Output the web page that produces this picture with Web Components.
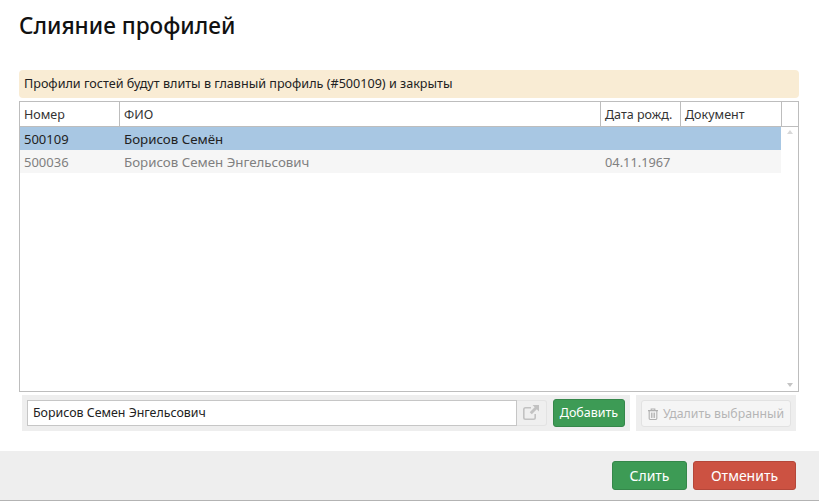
<!DOCTYPE html>
<html lang="ru">
<head>
<meta charset="utf-8">
<title>Слияние профилей</title>
<style>
  html, body { margin: 0; padding: 0; background: #fff; }
  body { font: 13px/18px "Noto Sans", sans-serif; color: #222; }
</style>
</head>
<body>
<merge-dialog>
  <span slot="title">Слияние профилей</span>
  <span slot="notice">Профили гостей будут влиты в главный профиль (#500109) и закрыты</span>
  <profile-grid slot="grid"></profile-grid>
  <app-button slot="actions" variant="success" size="large">Слить</app-button>
  <app-button slot="actions" variant="danger" size="large">Отменить</app-button>
</merge-dialog>

<script>
  let dialogTemplate = document.createElement("template");
  dialogTemplate.innerHTML = `
  <style>
    :host {
      display: flex;
      flex-direction: column;
      height: 501px;
      width: 819px;
      box-sizing: border-box;
    }
    h1 {
      margin: 0;
      padding: 11px 19px 0;
      height: 70px;
      box-sizing: border-box;
      font-size: 22.6px;
      line-height: 30px;
      font-weight: 500;
      color: #111;
    }
    .body {
      flex: 1;
      display: flex;
      flex-direction: column;
      padding: 0 20px 0 19px;
    }
    .notice {
      background: #f9ecd4;
      border-radius: 4px;
      height: 28px;
      line-height: 28px;
      padding: 0 5px;
      margin-bottom: 3px;
      font-size: 12.6px;
    }
    .tools {
      display: flex;
      justify-content: space-between;
      padding: 3px 3px 0;
      height: 36px;
      margin-bottom: 20px;
    }
    .footer {
      height: 50px;
      box-sizing: border-box;
      background: #eeeeee;
      border-bottom: 1px solid #b3b3b3;
      display: flex;
      justify-content: flex-end;
      align-items: center;
      gap: 6px;
      padding: 0 23px 0 0;
    }
  </style>
  <h1><slot name="title"></slot></h1>
  <div class="body">
    <div class="notice"><slot name="notice"></slot></div>
    <slot name="grid"></slot>
    <div class="tools">
      <guest-picker value="Борисов Семен Энгельсович"></guest-picker>
      <remove-panel></remove-panel>
    </div>
  </div>
  <div class="footer"><slot name="actions"></slot></div>
  `;

  class MergeDialog extends HTMLElement {
    constructor() {
      super();
      this.attachShadow({ mode: "open" }).appendChild(dialogTemplate.content.cloneNode(true));
    }
  }

  let gridTemplate = document.createElement("template");
  gridTemplate.innerHTML = `
  <style>
    :host {
      display: block;
      height: 291px;
      box-sizing: border-box;
      border: 1px solid #bdbdbd;
      font-size: 12.5px;
      line-height: 25px;
    }
    .row {
      display: grid;
      grid-template-columns: 100px 481px 80px 101px 1fr;
    }
    .head {
      height: 24px;
      border-bottom: 1px solid #bdbdbd;
      color: #333;
    }
    .head div {
      padding-left: 4px;
      border-right: 1px solid #bdbdbd;
      height: 24px;
      line-height: 25px;
      white-space: nowrap;
      overflow: hidden;
    }
    .head div:last-child { border-right: none; }
    .scroll {
      display: flex;
      height: 265px;
    }
    .rows { flex: 1; }
    .data { height: 23px; grid-template-columns: 100px 481px 80px 1fr; font-size: 13.3px; }
    .data div { padding-left: 4px; }
    .data div:nth-child(1) { font-size: 13px; }
    .data div:nth-child(3) { font-size: 12.8px; }
    .data.main { background: #a8c7e3; color: #222; }
    .data.guest { background: #f6f6f6; color: #808080; }
    .bar {
      width: 17px;
      display: flex;
      flex-direction: column;
      justify-content: space-between;
      align-items: center;
      padding: 3px 0 5px;
      box-sizing: border-box;
    }
    .bar i {
      width: 0;
      height: 0;
      border-left: 3px solid transparent;
      border-right: 3px solid transparent;
    }
    .bar .up { border-bottom: 4px solid #d8d8d8; }
    .bar .down { border-top: 4px solid #c4c4c4; }
  </style>
  <div class="row head">
    <div>Номер</div><div>ФИО</div><div>Дата рожд.</div><div>Документ</div><div></div>
  </div>
  <div class="scroll">
    <div class="rows" id="rows"></div>
    <div class="bar"><i class="up"></i><i class="down"></i></div>
  </div>
  `;

  let gridRows = [
    { kind: "main", num: "500109", name: "Борисов Семён", born: "", doc: "" },
    { kind: "guest", num: "500036", name: "Борисов Семен Энгельсович", born: "04.11.1967", doc: "" }
  ];

  class ProfileGrid extends HTMLElement {
    constructor() {
      super();
      this.shadowDOM = this.attachShadow({ mode: "open" });
      this.shadowDOM.appendChild(gridTemplate.content.cloneNode(true));
    }

    connectedCallback() {
      let rows = this.shadowDOM.querySelector("#rows");
      gridRows.forEach((item) => {
        let row = document.createElement("div");
        row.className = "row data " + item.kind;
        [item.num, item.name, item.born, item.doc].forEach((text) => {
          let cell = document.createElement("div");
          cell.textContent = text;
          row.appendChild(cell);
        });
        rows.appendChild(row);
      });
    }
  }

  let buttonTemplate = document.createElement("template");
  buttonTemplate.innerHTML = `
  <style>
    :host {
      display: inline-flex;
      align-items: center;
      justify-content: center;
      box-sizing: border-box;
      border-radius: 3px;
      border: 1px solid transparent;
      font-size: 12.5px;
      white-space: nowrap;
    }
    :host([variant="success"]) {
      background: #3d9b55;
      border-color: #35874a;
      color: #fff;
    }
    :host([variant="danger"]) {
      background: #cc5242;
      border-color: #b4473a;
      color: #fff;
    }
    :host([variant="disabled"]) {
      background: #f5f5f5;
      border-color: #e2e2e2;
      color: #b5b5b5;
      font-size: 12.3px;
      gap: 5px;
      width: 150px;
      height: 27px;
      margin-top: 1px;
    }
    :host([size="small"]) { width: 72px; height: 28px; }
    :host([size="large"]) { height: 29px; font-size: 14px; padding: 0 18px; }
    :host([size="large"][variant="success"]) { width: 75px; padding: 0; }
    :host([size="large"][variant="danger"]) { width: 103px; padding: 0; }
  </style>
  <slot></slot>
  `;

  class AppButton extends HTMLElement {
    constructor() {
      super();
      this.attachShadow({ mode: "open" }).appendChild(buttonTemplate.content.cloneNode(true));
    }
  }

  let pickerTemplate = document.createElement("template");
  pickerTemplate.innerHTML = `
  <style>
    :host {
      display: flex;
      align-items: center;
      width: 608px;
      height: 36px;
      box-sizing: border-box;
      background: #eeeeee;
      padding: 5px;
    }
    .field {
      width: 490px;
      height: 26px;
      box-sizing: border-box;
      background: #fff;
      border: 1px solid #c6c6c6;
      line-height: 24px;
      padding-left: 5px;
      font-size: 12.4px;
      color: #222;
    }
    .open {
      width: 30px;
      height: 26px;
      box-sizing: border-box;
      border: 1px solid #e3e3e3;
      border-left: none;
      border-radius: 0 3px 3px 0;
      background: #efefef;
      display: flex;
      align-items: center;
      justify-content: center;
      margin-right: 6px;
      padding: 0 2px 2px 0;
    }
    svg { display: block; }
  </style>
  <div class="field" id="field"></div>
  <div class="open">
    <svg width="16" height="15" viewBox="0 0 16 15">
      <path d="M8 2.800H2.500C1.500 2.800 .8 3.500 .8 4.500v8C.8 13.500 1.500 14.200 2.500 14.200h8c1 0 1.700-.7 1.700-1.700V9" fill="none" stroke="#c2c2c2" stroke-width="1.600"/>
      <path d="M9.500 0H16V6.500L13.800 4.300l-5 5-2.100-2.100 5-5z" fill="#c2c2c2"/>
    </svg>
  </div>
  <app-button variant="success" size="small">Добавить</app-button>
  `;

  class GuestPicker extends HTMLElement {
    constructor() {
      super();
      this.shadowDOM = this.attachShadow({ mode: "open" });
      this.shadowDOM.appendChild(pickerTemplate.content.cloneNode(true));
    }

    connectedCallback() {
      this.shadowDOM.querySelector("#field").textContent = this.getAttribute("value") || "";
    }
  }

  let removeTemplate = document.createElement("template");
  removeTemplate.innerHTML = `
  <style>
    :host {
      display: flex;
      align-items: center;
      justify-content: center;
      width: 160px;
      height: 36px;
      background: #eeeeee;
    }
    svg { display: block; }
  </style>
  <app-button variant="disabled">
    <svg width="10" height="12" viewBox="0 0 11 13">
      <path d="M3.500 2.500V1h4v1.500M0 2.800h11M1.300 3v8.500c0 .7.500 1 1 1h6.400c.5 0 1-.3 1-1V3" fill="none" stroke="#b0b0b0" stroke-width="1.200"/>
      <path d="M3.800 5v5.800M5.500 5v5.800M7.200 5v5.800" fill="none" stroke="#b0b0b0" stroke-width="1"/>
    </svg>
    <span>Удалить выбранный</span>
  </app-button>
  `;

  class RemovePanel extends HTMLElement {
    constructor() {
      super();
      this.attachShadow({ mode: "open" }).appendChild(removeTemplate.content.cloneNode(true));
    }
  }

  customElements.define("app-button", AppButton);
  customElements.define("guest-picker", GuestPicker);
  customElements.define("remove-panel", RemovePanel);
  customElements.define("profile-grid", ProfileGrid);
  customElements.define("merge-dialog", MergeDialog);
</script>
</body>
</html>
